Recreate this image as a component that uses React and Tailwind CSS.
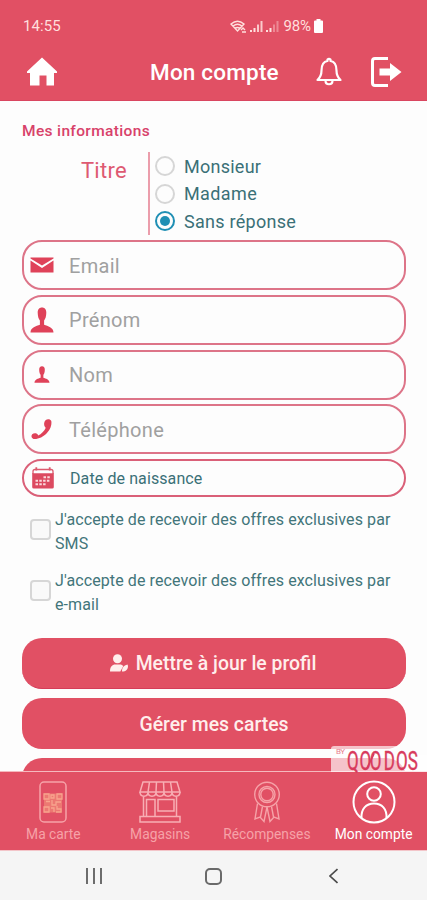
import React, { useState } from "react";

const titles = [
  { label: "Monsieur", spacing: "tracking-[0.25px]" },
  { label: "Madame", spacing: "tracking-[0.4px]" },
  { label: "Sans réponse", spacing: "tracking-[0.28px]" },
];

const MailIcon = () => (
  <svg className="w-6 h-6" viewBox="0 0 24 24" fill="currentColor">
    <path d="M0.5 4.500h23v1L12 12.400 0.500 5.500z" />
    <path d="M0.5 7.6 12 15l11.5-7.400V19.500H0.500z" />
  </svg>
);

const PersonIcon = ({ className }) => (
  <svg className={className} viewBox="0 0 24 26" fill="currentColor">
    <path d="M12 .5c2.900 0 4.400 2.200 4.300 5.300-.1 3.600-.8 6.200-2.200 7.700v4.300c3.600 1.200 9.400 2.700 9.400 7.700H.5c0-5 5.800-6.500 9.400-7.700v-4.300c-1.400-1.500-2.100-4.100-2.200-7.700C7.600 2.700 9.100.5 12 .5z" />
  </svg>
);

const PhoneIcon = () => (
  <svg className="w-6 h-6" viewBox="0 0 24 24" fill="currentColor">
    <path d="M15.500 3.300c1.600-1.600 4.800-1.500 5.800.6 1.500 8.800-8.800 18.900-17.800 18-2.200-.6-2.600-3.100-1.300-4.600 1.500-1.300 4.200-1.400 5.600.3l.3.900c3.300-1.600 6.100-4.400 7.700-7.800l-.7-.5c-1.500-1.700-1.300-5.200.4-6.900z" />
  </svg>
);

const CalendarIcon = () => (
  <svg className="w-6 h-6" viewBox="0 0 24 24">
    <path d="M2 8V5.500Q2 3.500 4 3.500h16q2 0 2 2V8" fill="#fdfdfd" stroke="#dc5a6e" strokeWidth="1.300" />
    <path d="M1.200 7.300h21.600V21q0 1.600-1.600 1.600H2.800Q1.200 22.600 1.200 21z" fill="#dc4a60" />
    <path d="M5.300 1.200v3.400M18.700 1.200v3.400" stroke="#dc5a6e" strokeWidth="1.800" />
    <path d="M12.500 11.300h6.500M4.500 14.700h14.500M4.500 18.200h11" stroke="#fbd9dc" strokeWidth="2" strokeDasharray="2.500 1.300" />
  </svg>
);

const Field = ({ icon, label }) => (
  <div className="h-[50px] rounded-[20px] border-2 border-[#dd7488] flex items-center">
    <div className="w-[36px] flex justify-center text-[#df4259]">{icon}</div>
    <span className="ml-[9px] pt-px text-[20px] leading-6 tracking-[0.3px] text-[#a0a0a0]">{label}</span>
  </div>
);

const Consent = ({ end }) => {
  const [checked, setChecked] = useState(false);
  return (
    <label className="flex items-center gap-1 pl-2 h-12">
      <span
        onClick={() => setChecked(!checked)}
        className="mb-[3px] size-[21px] shrink-0 rounded-[4px] border-2 border-[#d6d6d6] bg-[#f9f9f9]"
      />
      <span className="w-[345px] pt-px text-[16px] leading-6 tracking-[0.1px] text-[#42757a]">
        J'accepte de recevoir des offres exclusives par {end}
      </span>
    </label>
  );
};

const SignalIcon = ({ weak }) => (
  <svg className="w-[13px] h-[13px]" viewBox="0 0 13 13" fill="currentColor">
    <path d="M0 10h2v2H0zM3.500 8h2v4h-2z" />
    <path d="M7 4.500h2V12H7zM10.500 1h2v11h-2z" opacity={weak ? 0.4 : 0.85} />
  </svg>
);

const CardIcon = () => (
  <svg className="w-7 h-[42px]" viewBox="0 0 28 42" fill="none">
    <rect x="1" y="1" width="26" height="40" rx="4" stroke="#f6a2a8" strokeWidth="1.500" />
    <path d="M5 12.500h18v19H5z" fill="#ec7872" />
    <path d="M5 13h5v5H5zM18 13h5v5h-5zM5 26h5v5H5z" stroke="#f8a48d" strokeWidth="1.300" />
    <path d="M12 14h3v3h-3zM7 20.500h4M13 19v5h4v-3h5M12 27h3v4M18 25v3h4v3h-5" stroke="#f8a48d" strokeWidth="1.300" />
  </svg>
);

const ShopIcon = () => (
  <svg className="w-[42px] h-[42px]" viewBox="0 0 42 42" fill="none" stroke="#f8aeb4" strokeWidth="1.500">
    <path d="M4 1h34l3 10H1zM10.500 1 9 11M17.500 1 17 11M24.500 1 25 11M31.500 1 33 11" />
    <path d="M1 11c0 5.500 8 5.500 8 0 0 5.500 8 5.500 8 0 0 5.500 8 5.500 8 0 0 5.500 8 5.500 8 0 0 5.500 8 5.500 8 0" />
    <path d="M4.500 15.500V35M37.500 15.500V35M7.500 35V18.500h8.500V35M19 18.500h16v11.500H19zM1 35.500h40V41H1z" />
  </svg>
);

const AwardIcon = () => (
  <svg className="w-[28px] h-[42px]" viewBox="0 0 28 42" fill="none" stroke="#f6a2a8" strokeWidth="1.400">
    <circle cx="14" cy="13.500" r="12.300" />
    <circle cx="14" cy="13.500" r="8" />
    <circle cx="14" cy="13.500" r="6.200" />
    <path d="M4.500 22.500 2 38l5-2 4 4.500 3-14.500 3 14.500 4-4.500 5 2-2.500-15.500M9.500 25.500 7.500 36M18.500 25.500l2 10.500" />
  </svg>
);

const AccountIcon = () => (
  <svg className="w-[44px] h-[44px]" viewBox="0 0 44 44" fill="none" stroke="#fff" strokeWidth="2">
    <circle cx="22" cy="22" r="20.500" />
    <circle cx="22" cy="14" r="6.800" />
    <path d="M9.500 38C9 29 14 23.500 22 23.500S35 29 34.500 38" />
  </svg>
);

const tabs = [
  { label: "Ma carte", icon: <CardIcon />, color: "text-[#f6a2a8]" },
  { label: "Magasins", icon: <ShopIcon />, color: "text-[#f6a2a8]" },
  { label: "Récompenses", icon: <AwardIcon />, color: "text-[#f6a2a8]" },
  { label: "Mon compte", icon: <AccountIcon />, color: "text-white" },
];

const App = () => {
  const [title, setTitle] = useState("Sans réponse");

  return (
    <div className="relative w-[427px] h-[900px] overflow-hidden flex flex-col bg-[#fdfdfd] font-[Roboto,sans-serif]">
      {/* Header */}
      <header className="h-[101px] shrink-0 bg-[#e15064] border-b border-[#d94660] text-white">
        <div className="h-[52px] flex items-center pl-[23px] pr-[104px] justify-between text-[#ffdfdd]">
          <span className="text-[15px] tracking-[0.1px]">14:55</span>
          <div className="flex items-center gap-[3px]">
            <svg className="w-[17px] h-[13px]" viewBox="0 0 17 13" fill="none" stroke="currentColor" strokeWidth="1.400">
              <path d="M1 4Q7.500-1.500 14 4L7.500 11zM3 6q4.500-3.500 9 0M5 8.500q2.500-2 5 0M11 10l2-2 2 2M12 12h4" />
            </svg>
            <SignalIcon />
            <SignalIcon weak />
            <span className="ml-[1px] text-[15px] tracking-[-0.1px]">98%</span>
            <svg className="w-[9px] h-[14px]" viewBox="0 0 9 14" fill="#fff">
              <path d="M2.500 0h4v1.500H8q1 0 1 1V13q0 1-1 1H1q-1 0-1-1V2.500q0-1 1-1h1.500z" />
            </svg>
          </div>
        </div>
        <div className="h-[40px] flex items-center pl-[26px] pr-[25px]">
          <svg className="w-[32px] h-[30px]" viewBox="0 0 32 30" fill="#fff">
            <path d="M16 .5 31 14.500v1.500h-3V28.500h-7.500V18.500h-7V28.500H4V16H1v-1.500z" />
          </svg>
          <h1 className="ml-[92px] w-[130px] pt-[2px] whitespace-nowrap text-[22.500px] font-medium tracking-[0.2px]">Mon compte</h1>
          <svg className="ml-[36px] w-[26px] h-[30px]" viewBox="0 0 26 30" fill="none" stroke="#fff" strokeWidth="2.200">
            <path d="M1.500 23c2.800-2.500 4-5.500 4-9.500C5.500 7.500 8 4.500 11.500 4V2.500q1.500-1.500 3 0V4c3.500.5 6 3.500 6 9.500 0 4 1.200 7 4 9.500z" strokeLinejoin="round" />
            <path d="M9.500 23.500c0 5 7 5 7 0" />
          </svg>
          <svg className="ml-auto w-[32px] h-[32px]" viewBox="0 0 32 32">
            <path d="M18 2.500H5q-2.500 0-2.500 2.500v22q0 2.500 2.500 2.500h13" fill="none" stroke="#fff" strokeWidth="3" />
            <path d="M9.500 12.500H20V7L31.500 16 20 25V19.500H9.500z" fill="#fff" />
          </svg>
        </div>
      </header>

      {/* Form */}
      <main className="flex-1 min-h-0 overflow-hidden px-[22px] pr-[21px] pt-[19px]">
        <h2 className="h-5 pt-px text-[15.500px] leading-5 font-medium tracking-[0.35px] text-[#d8426a]">Mes informations</h2>
        <div className="mt-3 h-[83px] flex">
          <div className="w-[128px] pt-[4px] pr-[21px] text-right text-[22px] leading-[30px] tracking-[0.3px] text-[#de5a72] border-r-2 border-[#eb9dab]">Titre</div>
          <div className="pl-[5px] pt-[0.5px]">
            {titles.map((t) => (
              <label key={t.label} className="h-[27.500px] flex items-center gap-[9px]" onClick={() => setTitle(t.label)}>
                {title === t.label ? (
                  <span className="size-[20px] rounded-full border-2 border-[#1f8fb4] flex items-center justify-center">
                    <span className="size-[10px] rounded-full bg-[#1f8fb4]" />
                  </span>
                ) : (
                  <span className="size-[20px] rounded-full border-2 border-[#d6d6d6]" />
                )}
                <span className={`pt-px text-[18px] leading-6 text-[#3a7077] ${t.spacing}`}>{t.label}</span>
              </label>
            ))}
          </div>
        </div>

        <div className="mt-[5px] flex flex-col gap-[4.800px]">
          <Field icon={<MailIcon />} label="Email" />
          <Field icon={<PersonIcon className="w-6 h-[26px]" />} label="Prénom" />
          <Field icon={<PersonIcon className="w-4 h-[17px]" />} label="Nom" />
          <Field icon={<PhoneIcon />} label="Téléphone" />
          <div className="h-[38px] rounded-[19px] border-2 border-[#da6078] flex items-center">
            <div className="w-[38px] flex justify-center"><CalendarIcon /></div>
            <span className="ml-[8px] pt-px text-[16px] tracking-[0.1px] text-[#3a7077]">Date de naissance</span>
          </div>
        </div>

        <div className="mt-[10px] flex flex-col gap-[13px]">
          <Consent end="SMS" />
          <Consent end="e-mail" />
        </div>

        <div className="mt-[22px] flex flex-col gap-[9px] text-[19.400px] font-medium text-[#ffeeec]">
          <button className="h-[51px] shrink-0 rounded-[20px] bg-[#e15064] border-b border-[#d63c58] flex items-center justify-center gap-[8px] pr-[2px]">
            <svg className="w-[18px] h-[18px]" viewBox="0 0 18 18" fill="currentColor">
              <circle cx="7.500" cy="4.800" r="4.500" />
              <path d="M0 17.500c0-5 2.500-7 5-7h5c1.400 0 2.500.6 3.300 1.600l-3 5.400zM17.500 10.500l.5 1.500c0 3.500-2 5.500-6 5.500 0-3.500 1.500-6 5.500-7z" />
            </svg>
            <span>Mettre à jour le profil</span>
          </button>
          <button className="h-[51px] shrink-0 pt-px rounded-[20px] bg-[#e15064]">Gérer mes cartes</button>
          <button className="h-[51px] shrink-0 rounded-[20px] bg-[#e15064]" />
        </div>
      </main>

      {/* Brand badge over the end of the list */}
      <div className="absolute left-[331px] top-[746px] w-[96px] h-[26px]">
        <svg className="w-full h-full overflow-visible" viewBox="0 0 96 26">
          <path d="M0 26V3q0-3 3-3h67q-4 4-12 4H17v5h79v17z" fill="#fff" opacity=".66" />
          <text x="5" y="8" fontSize="8" fill="#e9808f" textLength="9">BY</text>
          <text transform="translate(16 24) scale(.68 1)" x="0 18.500 33.500 54 72 89.500" fontSize="25" fill="#d83a5c" stroke="#d83a5c" strokeWidth=".4">QOODOS</text>
          <path d="M36 22 43 8" stroke="#d83a5c" strokeWidth="1.600" />
        </svg>
      </div>

      {/* Tab bar */}
      <nav className="h-[79px] shrink-0 border-t border-[#f5b9be] bg-[#e15064] grid grid-cols-4">
        {tabs.map((tab) => (
          <div key={tab.label} className={`flex flex-col items-center pt-2 ${tab.color}`}>
            <div className="h-[44px] flex items-center">{tab.icon}</div>
            <span className="pt-px text-[13.800px] leading-[18px]">{tab.label}</span>
          </div>
        ))}
      </nav>

      {/* Android navigation */}
      <footer className="h-[50px] shrink-0 bg-[#f5f5f5] border-t border-[#f3c5c9] flex items-center pt-px pl-[86px] pr-[89px] justify-between">
        <svg className="w-4 h-4" viewBox="0 0 16 16" stroke="#4b4b4b" strokeWidth="1.600">
          <path d="M1 0v16M8 0v16M15 0v16" />
        </svg>
        <span className="mr-[4px] size-[17px] rounded-[5px] border-2 border-[#6a6a6a]" />
        <svg className="w-[9px] h-4" viewBox="0 0 9 16" fill="none" stroke="#4b4b4b" strokeWidth="1.700">
          <path d="M8.500 1 1 8l7.500 7" />
        </svg>
      </footer>
    </div>
  );
};

export default App;
